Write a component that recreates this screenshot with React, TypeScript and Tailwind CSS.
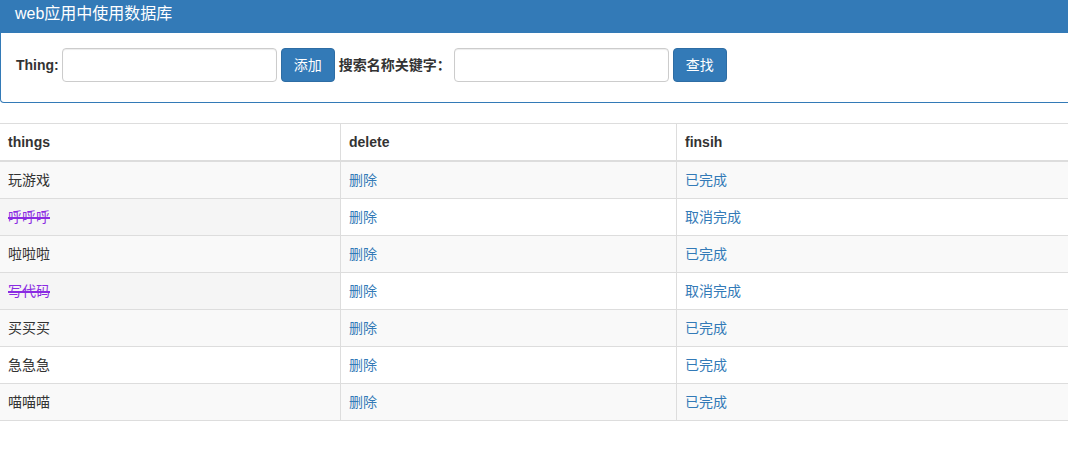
import { useState } from 'react'

type Thing = {
  name: string
  done: boolean
}

const initialThings: Thing[] = [
  { name: '玩游戏', done: false },
  { name: '呼呼呼', done: true },
  { name: '啦啦啦', done: false },
  { name: '写代码', done: true },
  { name: '买买买', done: false },
  { name: '急急急', done: false },
  { name: '喵喵喵', done: false },
]

const inputClass =
  'h-[34px] w-[215px] rounded-[4px] border border-[#ccc] bg-white px-3 text-[14px] text-[#555] shadow-[inset_0_1px_1px_rgba(0,0,0,0.075)] outline-none'

const buttonClass =
  'h-[34px] rounded-[4px] border border-[#2e6da4] bg-[#337ab7] px-3 text-[14px] leading-5 text-white'

const App = () => {
  const [things, setThings] = useState(initialThings)
  const [thing, setThing] = useState('')
  const [query, setQuery] = useState('')

  const addThing = () => {
    if (!thing.trim()) return
    setThings([...things, { name: thing.trim(), done: false }])
    setThing('')
  }

  const toggle = (i: number) =>
    setThings(things.map((t, j) => (j === i ? { ...t, done: !t.done } : t)))

  const remove = (i: number) => setThings(things.filter((_, j) => j !== i))

  return (
    <div className="w-full overflow-hidden bg-white font-[family-name:'Liberation_Sans','Noto_Sans_CJK_SC',sans-serif] text-[14px] leading-5 text-[#333]">
      <div className="w-[1090px]">
        {/* panel */}
        <div className="rounded-b-[4px] border-x border-b border-[#337ab7]">
          <div className="h-[33px] bg-[#337ab7] px-[14px] pt-[5px] text-[16px] leading-[18px] text-white">
            web应用中使用数据库
          </div>
          <div className="flex items-center px-[15px] pt-[15px] pb-[20px]">
            <label className="mr-[3px] font-bold">Thing:</label>
            <input
              className={inputClass}
              value={thing}
              onChange={(e) => setThing(e.target.value)}
            />
            <button className={`${buttonClass} ml-[4px]`} onClick={addThing}>
              添加
            </button>
            <label className="ml-[4px] mr-[3px] font-bold">搜索名称关键字：</label>
            <input
              className={inputClass}
              value={query}
              onChange={(e) => setQuery(e.target.value)}
            />
            <button className={`${buttonClass} ml-[4px]`}>查找</button>
          </div>
        </div>

        {/* table */}
        <div className="mt-[20px]">
          <div className="grid grid-cols-[340px_336px_1fr] font-bold">
            <div className="flex h-[39px] items-center border-t border-b-2 border-[#ddd] px-2">things</div>
            <div className="flex h-[39px] items-center border-t border-b-2 border-l border-[#ddd] px-2">delete</div>
            <div className="flex h-[39px] items-center border-t border-b-2 border-l border-[#ddd] px-2">finsih</div>
          </div>
          {things
            .map((t, i) => ({ t, i }))
            .filter(({ t }) => t.name.includes(query))
            .map(({ t, i }, row) => (
              <div
                key={i}
                className={`grid grid-cols-[340px_336px_1fr] ${row % 2 === 0 ? 'bg-[#f9f9f9]' : 'bg-white'}`}
              >
                <div
                  className={`flex h-[37px] items-center border-b border-[#ddd] px-2 ${
                    t.done ? 'bg-[#f5f5f5] text-[#8a2be2]' : ''
                  }`}
                >
                  <span className={t.done ? 'line-through decoration-[1.5px]' : ''}>{t.name}</span>
                </div>
                <div className="flex h-[37px] items-center border-b border-l border-[#ddd] px-2">
                  <a className="cursor-pointer text-[#337ab7]" onClick={() => remove(i)}>
                    删除
                  </a>
                </div>
                <div className="flex h-[37px] items-center border-b border-l border-[#ddd] px-2">
                  <a className="cursor-pointer text-[#337ab7]" onClick={() => toggle(i)}>
                    {t.done ? '取消完成' : '已完成'}
                  </a>
                </div>
              </div>
            ))}
        </div>
      </div>
    </div>
  )
}

export default App
